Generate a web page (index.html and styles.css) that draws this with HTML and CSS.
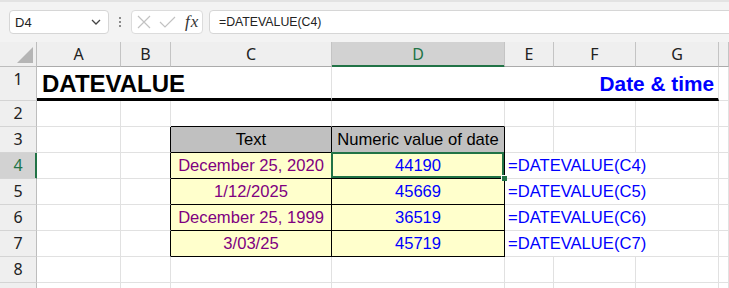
FILE: index.html
```html
<!DOCTYPE html>
<html lang="en">
<head>
    <meta charset="UTF-8">
    <title>DATEVALUE</title>
    <link rel="stylesheet" href="styles.css">
</head>
<body>
    <div class="toolbar">
        <div class="name-box">
            <span>D4</span>
            <svg width="10" height="6" viewBox="0 0 10 6"><path d="M1 1 L5 5 L9 1" fill="none" stroke="#444" stroke-width="1.3"/></svg>
        </div>
        <div class="grip"><i></i><i></i><i></i></div>
        <div class="fx-buttons">
            <svg width="14" height="14" viewBox="0 0 14 14"><path d="M1 1 L13 13 M13 1 L1 13" stroke="#c2c2c2" stroke-width="1.2"/></svg>
            <svg width="17" height="12" viewBox="0 0 17 12"><path d="M1 6 L6 11 L16 1" fill="none" stroke="#c2c2c2" stroke-width="1.2"/></svg>
            <span class="fx">fx</span>
        </div>
        <div class="formula-box">=DATEVALUE(C4)</div>
    </div>

    <div class="sheet">
        <!-- column headers -->
        <div class="corner"><svg width="16" height="16" viewBox="0 0 16 16"><polygon points="16,0 16,16 0,16" fill="#b5b5b5"/></svg></div>
        <div class="col-head">A</div>
        <div class="col-head">B</div>
        <div class="col-head">C</div>
        <div class="col-head selected">D</div>
        <div class="col-head">E</div>
        <div class="col-head">F</div>
        <div class="col-head">G</div>
        <div class="col-head"></div>

        <!-- row 1 -->
        <div class="row-head">1</div>
        <div class="cell title span-3">DATEVALUE</div>
        <div class="cell subtitle span-4">Date &amp; time</div>
        <div class="cell"></div>

        <!-- row 2 -->
        <div class="row-head">2</div>
        <div class="cell"></div>
        <div class="cell"></div>
        <div class="cell edge-b"></div>
        <div class="cell edge-b"></div>
        <div class="cell"></div>
        <div class="cell"></div>
        <div class="cell"></div>
        <div class="cell"></div>

        <!-- row 3 -->
        <div class="row-head">3</div>
        <div class="cell"></div>
        <div class="cell edge-r"></div>
        <div class="cell tc th">Text</div>
        <div class="cell tc th">Numeric value of date</div>
        <div class="cell"></div>
        <div class="cell"></div>
        <div class="cell"></div>
        <div class="cell"></div>

        <!-- row 4 -->
        <div class="row-head selected">4</div>
        <div class="cell"></div>
        <div class="cell edge-r"></div>
        <div class="cell tc date">December 25, 2020</div>
        <div class="cell tc num active">44190</div>
        <div class="cell formula span-3">=DATEVALUE(C4)</div>
        <div class="cell"></div>

        <!-- row 5 -->
        <div class="row-head">5</div>
        <div class="cell"></div>
        <div class="cell edge-r"></div>
        <div class="cell tc date">1/12/2025</div>
        <div class="cell tc num">45669</div>
        <div class="cell formula span-3">=DATEVALUE(C5)</div>
        <div class="cell"></div>

        <!-- row 6 -->
        <div class="row-head">6</div>
        <div class="cell"></div>
        <div class="cell edge-r"></div>
        <div class="cell tc date">December 25, 1999</div>
        <div class="cell tc num">36519</div>
        <div class="cell formula span-3">=DATEVALUE(C6)</div>
        <div class="cell"></div>

        <!-- row 7 -->
        <div class="row-head">7</div>
        <div class="cell"></div>
        <div class="cell edge-r"></div>
        <div class="cell tc date">3/03/25</div>
        <div class="cell tc num">45719</div>
        <div class="cell formula span-3">=DATEVALUE(C7)</div>
        <div class="cell"></div>

        <!-- row 8 -->
        <div class="row-head">8</div>
        <div class="cell"></div>
        <div class="cell"></div>
        <div class="cell"></div>
        <div class="cell"></div>
        <div class="cell"></div>
        <div class="cell"></div>
        <div class="cell"></div>
        <div class="cell"></div>

        <!-- row 9, only its top edge shows -->
        <div class="row-head"></div>
        <div class="cell"></div>
        <div class="cell"></div>
        <div class="cell"></div>
        <div class="cell"></div>
        <div class="cell"></div>
        <div class="cell"></div>
        <div class="cell"></div>
        <div class="cell"></div>
    </div>
</body>
</html>
```

FILE: styles.css
```css
body {
    margin: 0;
    background-color: white;
    font-family: "Liberation Sans", Arial, sans-serif;
    overflow: hidden;
}
/* formula bar */
.toolbar {
    height: 42px;
    box-sizing: border-box;
    background-color: #f3f3f3;
    border-top: 2px solid #e3e3e3;
    display: flex;
    align-items: center;
    padding-left: 9px;
}
.name-box {
    width: 100px;
    height: 24px;
    box-sizing: border-box;
    background-color: white;
    border: 1px solid #d6d6d6;
    border-radius: 4px;
    display: flex;
    align-items: center;
    justify-content: space-between;
    padding: 0 7px 0 5px;
    font-size: 13px;
    color: #222;
}
.grip {
    width: 22px;
    display: flex;
    flex-direction: column;
    align-items: center;
    gap: 2px;
}
.grip i {
    width: 2px;
    height: 2px;
    background-color: #8c8c8c;
}
.fx-buttons {
    width: 72px;
    height: 24px;
    box-sizing: border-box;
    background-color: white;
    border: 1px solid #dcdcdc;
    border-radius: 4px;
    display: flex;
    align-items: center;
    padding-left: 5px;
}
.fx-buttons svg {
    margin-right: 8px;
}
.fx {
    font-family: "Liberation Serif", "DejaVu Serif", serif;
    font-style: italic;
    font-size: 17px;
    letter-spacing: 1px;
    color: #333;
    margin-left: 1px;
}
.formula-box {
    flex: 1;
    margin-left: 6px;
    margin-right: -10px;
    height: 24px;
    box-sizing: border-box;
    background-color: white;
    border: 1px solid #d6d6d6;
    border-radius: 4px;
    padding-left: 9px;
    font-size: 12.3px;
    line-height: 22px;
    color: #222;
}
/* grid */
.sheet {
    display: grid;
    grid-template-columns: 37px 84px 50px 161px 173px 49px 82px 83px 1fr;
    grid-template-rows: 25px 34px repeat(8, 26px);
}
.corner {
    background-color: #efefef;
    border-right: 1px solid #bdbdbd;
    border-bottom: 1px solid #bdbdbd;
    display: flex;
    justify-content: flex-end;
    align-items: flex-end;
    padding: 0 3px 3px 0;
}
.col-head, .row-head {
    background-color: #efefef;
    font-family: "Noto Sans", "Open Sans", sans-serif;
    font-size: 16px;
    color: #222;
    text-align: center;
}
.col-head {
    line-height: 24px;
    border-right: 1px solid #c4c4c4;
    border-bottom: 1px solid #ababab;
}
.row-head {
    line-height: 25px;
    border-right: 1px solid #bdbdbd;
    border-bottom: 1px solid #d4d4d4;
}
.col-head.selected {
    background-color: #d2d2d2;
    color: #217346;
    box-shadow: inset 0 -1px 0 #217346;
    border-bottom-color: #217346;
}
.row-head.selected {
    background-color: #d2d2d2;
    color: #217346;
    box-shadow: inset -1px 0 0 #217346;
    border-right-color: #217346;
}
.cell {
    border-right: 1px solid #e1e1e1;
    border-bottom: 1px solid #e1e1e1;
    font-size: 16.6px;
    line-height: 25px;
    white-space: nowrap;
    padding: 0 3px;
}
.span-3 {
    grid-column: span 3;
}
.span-4 {
    grid-column: span 4;
}
/* row 1 */
.title {
    font-size: 24px;
    font-weight: bold;
    line-height: 33px;
    padding-left: 5px;
    border-bottom: 3px solid black;
}
.subtitle {
    font-size: 20.8px;
    font-weight: bold;
    line-height: 34px;
    color: #0000ff;
    text-align: right;
    padding-right: 4px;
    border-bottom: 3px solid black;
}
/* table borders */
.edge-r {
    border-right-color: black;
}
.edge-b {
    border-bottom-color: black;
}
.tc {
    border-right-color: black;
    border-bottom-color: black;
    text-align: center;
}
.th {
    background-color: #c0c0c0;
    color: black;
}
.date {
    background-color: #ffffcc;
    color: #800080;
}
.num {
    background-color: #ffffcc;
    color: #0000ff;
}
.formula {
    color: #0000ff;
}
/* active cell */
.active {
    position: relative;
    z-index: 1;
}
.active::before {
    content: "";
    position: absolute;
    left: -1px;
    top: -1px;
    right: 0;
    bottom: 0;
    border: 2px solid #217346;
}
.active::after {
    content: "";
    position: absolute;
    right: -3px;
    bottom: -3px;
    width: 5px;
    height: 5px;
    background-color: #217346;
    border-left: 1px solid white;
    border-top: 1px solid white;
}
```
